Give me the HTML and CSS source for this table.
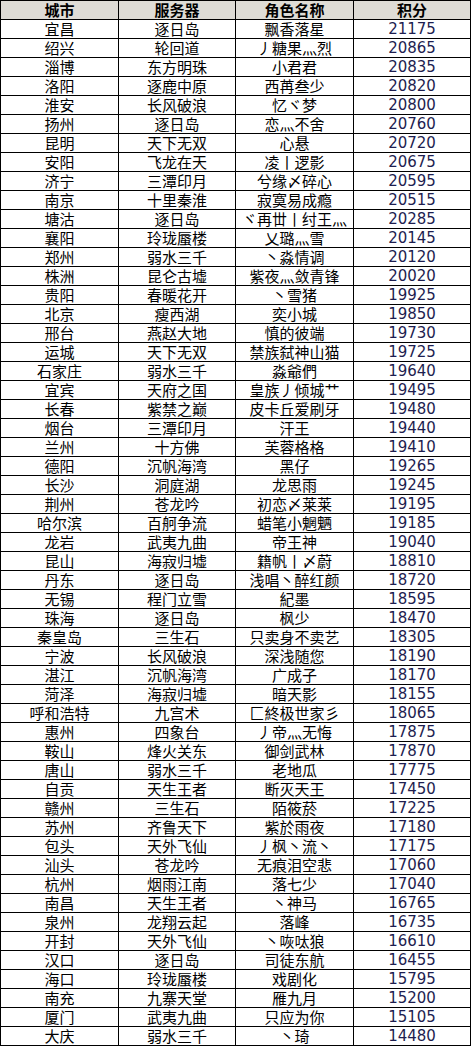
FILE: index.html
```html
<!DOCTYPE html>
<html lang="zh-CN">
<head>
<meta charset="utf-8">
<title>积分排行</title>
<link rel="stylesheet" href="styles.css">
</head>
<body>
<table class="rank">
<colgroup><col class="c1"><col class="c2"><col class="c3"><col class="c4"></colgroup>
<thead>
<tr><th>城市</th><th>服务器</th><th>角色名称</th><th>积分</th></tr>
</thead>
<tbody>
<tr><td>宜昌</td><td>逐日岛</td><td>飘香落星</td><td class="num">21175</td></tr>
<tr><td>绍兴</td><td>轮回道</td><td>丿糖果灬烈</td><td class="num">20865</td></tr>
<tr><td>淄博</td><td>东方明珠</td><td>小君君</td><td class="num">20835</td></tr>
<tr><td>洛阳</td><td>逐鹿中原</td><td>西苒叁少</td><td class="num">20820</td></tr>
<tr><td>淮安</td><td>长风破浪</td><td>忆ヾ梦</td><td class="num">20800</td></tr>
<tr><td>扬州</td><td>逐日岛</td><td>恋灬不舍</td><td class="num">20760</td></tr>
<tr><td>昆明</td><td>天下无双</td><td>心悬</td><td class="num">20720</td></tr>
<tr><td>安阳</td><td>飞龙在天</td><td>凌丨逻影</td><td class="num">20675</td></tr>
<tr><td>济宁</td><td>三潭印月</td><td>兮缘〆碎心</td><td class="num">20595</td></tr>
<tr><td>南京</td><td>十里秦淮</td><td>寂寞易成瘾</td><td class="num">20515</td></tr>
<tr><td>塘沽</td><td>逐日岛</td><td>ヾ再丗丨纣王灬</td><td class="num">20285</td></tr>
<tr><td>襄阳</td><td>玲珑蜃楼</td><td>乂璐灬雪</td><td class="num">20145</td></tr>
<tr><td>郑州</td><td>弱水三千</td><td>丶淼情调</td><td class="num">20120</td></tr>
<tr><td>株洲</td><td>昆仑古墟</td><td>紫夜灬敛青锋</td><td class="num">20020</td></tr>
<tr><td>贵阳</td><td>春暖花开</td><td>丶雪猪</td><td class="num">19925</td></tr>
<tr><td>北京</td><td>瘦西湖</td><td>奕小城</td><td class="num">19850</td></tr>
<tr><td>邢台</td><td>燕赵大地</td><td>慎的彼端</td><td class="num">19730</td></tr>
<tr><td>运城</td><td>天下无双</td><td>禁族弑神山猫</td><td class="num">19725</td></tr>
<tr><td>石家庄</td><td>弱水三千</td><td>淼爺們</td><td class="num">19640</td></tr>
<tr><td>宜宾</td><td>天府之国</td><td>皇族丿倾城艹</td><td class="num">19495</td></tr>
<tr><td>长春</td><td>紫禁之巅</td><td>皮卡丘爱刷牙</td><td class="num">19480</td></tr>
<tr><td>烟台</td><td>三潭印月</td><td>汗王</td><td class="num">19440</td></tr>
<tr><td>兰州</td><td>十方佛</td><td>芙蓉格格</td><td class="num">19410</td></tr>
<tr><td>德阳</td><td>沉帆海湾</td><td>黑仔</td><td class="num">19265</td></tr>
<tr><td>长沙</td><td>洞庭湖</td><td>龙思雨</td><td class="num">19245</td></tr>
<tr><td>荆州</td><td>苍龙吟</td><td>初恋〆莱莱</td><td class="num">19195</td></tr>
<tr><td>哈尔滨</td><td>百舸争流</td><td>蜡笔小魍魉</td><td class="num">19185</td></tr>
<tr><td>龙岩</td><td>武夷九曲</td><td>帝王神</td><td class="num">19040</td></tr>
<tr><td>昆山</td><td>海寂归墟</td><td>籍帆丨〆蔚</td><td class="num">18810</td></tr>
<tr><td>丹东</td><td>逐日岛</td><td>浅唱丶醉红颜</td><td class="num">18720</td></tr>
<tr><td>无锡</td><td>程门立雪</td><td>紀墨</td><td class="num">18595</td></tr>
<tr><td>珠海</td><td>逐日岛</td><td>枫少</td><td class="num">18470</td></tr>
<tr><td>秦皇岛</td><td>三生石</td><td>只卖身不卖艺</td><td class="num">18305</td></tr>
<tr><td>宁波</td><td>长风破浪</td><td>深浅随您</td><td class="num">18190</td></tr>
<tr><td>湛江</td><td>沉帆海湾</td><td>广成子</td><td class="num">18170</td></tr>
<tr><td>菏泽</td><td>海寂归墟</td><td>暗天影</td><td class="num">18155</td></tr>
<tr><td>呼和浩特</td><td>九宫术</td><td>匚終极世家彡</td><td class="num">18065</td></tr>
<tr><td>惠州</td><td>四象台</td><td>丿帝灬无悔</td><td class="num">17875</td></tr>
<tr><td>鞍山</td><td>烽火关东</td><td>御剑武林</td><td class="num">17870</td></tr>
<tr><td>唐山</td><td>弱水三千</td><td>老地瓜</td><td class="num">17775</td></tr>
<tr><td>自贡</td><td>天生王者</td><td>断灭天王</td><td class="num">17450</td></tr>
<tr><td>赣州</td><td>三生石</td><td>陌筱菸</td><td class="num">17225</td></tr>
<tr><td>苏州</td><td>齐鲁天下</td><td>紫於雨夜</td><td class="num">17180</td></tr>
<tr><td>包头</td><td>天外飞仙</td><td>丿枫丶流丶</td><td class="num">17175</td></tr>
<tr><td>汕头</td><td>苍龙吟</td><td>无痕泪空悲</td><td class="num">17060</td></tr>
<tr><td>杭州</td><td>烟雨江南</td><td>落七少</td><td class="num">17040</td></tr>
<tr><td>南昌</td><td>天生王者</td><td>丶神马</td><td class="num">16765</td></tr>
<tr><td>泉州</td><td>龙翔云起</td><td>落峰</td><td class="num">16735</td></tr>
<tr><td>开封</td><td>天外飞仙</td><td>丶咴呔狼</td><td class="num">16610</td></tr>
<tr><td>汉口</td><td>逐日岛</td><td>司徒东航</td><td class="num">16455</td></tr>
<tr><td>海口</td><td>玲珑蜃楼</td><td>戏剧化</td><td class="num">15795</td></tr>
<tr><td>南充</td><td>九寨天堂</td><td>雁九月</td><td class="num">15200</td></tr>
<tr><td>厦门</td><td>武夷九曲</td><td>只应为你</td><td class="num">15105</td></tr>
<tr><td>大庆</td><td>弱水三千</td><td>丶琦</td><td class="num">14480</td></tr>
</tbody>
</table>
</body>
</html>
```

FILE: styles.css
```css
html, body {
  margin: 0;
  padding: 0;
  background: #ffffff;
}

.rank {
  border-collapse: collapse;
  table-layout: fixed;
  width: 470px;
  margin: 0 0 0 0;
  font-family: "Noto Sans CJK SC", "Noto Sans", sans-serif;
  font-size: 15px;
  color: #000000;
}

.c1 { width: 118px; }
.c2 { width: 117px; }
.c3 { width: 118px; }
.c4 { width: 117px; }

.rank th,
.rank td {
  border: 1px solid #000000;
  height: 18px;
  padding: 0;
  line-height: 18px;
  text-align: center;
  vertical-align: middle;
  white-space: nowrap;
  overflow: hidden;
}

.rank th {
  background: #dedcd6;
  font-weight: bold;
}

.rank td.num {
  font-family: "DejaVu Sans", "Liberation Sans", sans-serif;
  font-size: 15px;
  color: #1e1e50;
}
```
